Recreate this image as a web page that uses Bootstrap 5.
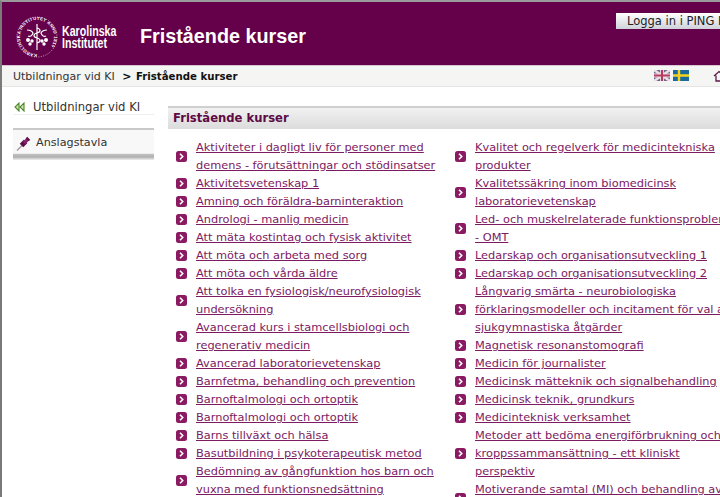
<!DOCTYPE html>
<html lang="sv">
<head>
    <meta charset="UTF-8">
    <meta name="viewport" content="width=device-width, initial-scale=1.0">
    <title>Fristående kurser</title>
    <link href="https://cdn.jsdelivr.net/npm/bootstrap@5.3.3/dist/css/bootstrap.min.css" rel="stylesheet">
    <style>
        html, body { height: 100%; overflow: hidden; }
        body {
            font-family: "DejaVu Sans", Verdana, sans-serif;
            font-size: 12px;
            color: #333;
            background: #fff;
            border-top: 2px solid #9a9a9a;
            border-left: 2px solid #7a7a7a;
            width: 720px;
        }
        .ki-header { height: 63px; background: #65004a; position: relative; padding-top: 7px; }
        .ki-logo { width: 124px; margin-left: 14px; flex: none; }
        .ki-seal { flex: none; width: 42px; height: 42px; }
        .ki-logotext {
            font-family: "Liberation Sans", sans-serif;
            font-weight: bold; font-size: 14px; line-height: 12.500px; color: #fff;
            margin-left: 4px; width: 53px; white-space: nowrap;
            transform: scaleX(.76); transform-origin: left center;
        }
        .ki-title {
            font-family: "Liberation Sans", Arial, sans-serif;
            font-weight: bold; font-size: 19.800px; color: #fff;
            margin: 0; line-height: 1;
        }
        .login-btn {
            position: absolute; top: 11px; left: 614px; width: 104px; height: 16px; overflow: hidden;
            background: linear-gradient(#fff, #cfd2da);
            font-size: 11.5px; line-height: 16px; color: #222; padding-left: 11px;
            white-space: nowrap;
        }
        .crumbs {
            height: 22px; background: #f5f5f3; border-top: 1px solid #d9c8d2; border-bottom: 1px solid #e4e4e4;
            font-size: 11px; padding-left: 11px; line-height: 21px; position: relative; white-space: nowrap;
        }
        .crumbs b { color: #111; font-size: 10.200px; }
        .crumbs .sep { font-weight: bold; color: #111; margin: 0 1px 0 4px; }
        .flag-box { position: absolute; left: 652px; top: 4px; gap: 3px; }
        .home-ico { position: absolute; left: 711px; top: 4px; }
        .side { width: 141px; margin-left: 11px; flex: none; padding-top: 9px; }
        .side-back {
            font-size: 11.600px; line-height: 15px; border-bottom: 1px solid #eee; padding: 4px 0 0 1px;
            white-space: nowrap; height: 19px;
        }
        .side-box {
            margin-top: 13px; height: 20px; background: #f8f8f8;
            border-top: 2px solid #c9c9c9; border-bottom: 1px solid #ececec;
            font-size: 11.200px; padding: 3px 0 0 3px; white-space: nowrap; box-sizing: content-box; gap: 5px;
        }
        .side-shadow { height: 6px; background: linear-gradient(#c2c2c2, #b0b0b0 50%, #f0f0f0); }
        .panel-box { margin: 19px 0 0 14px; width: 640px; flex: none; }
        .panel-head {
            height: 23px; border-top: 2px solid #cfcfcf;
            background: linear-gradient(#f1f1f1, #dcdcdc);
            font-size: 11.600px; font-weight: bold; color: #5d0a45; padding-left: 5px; line-height: 20px;
        }
        .course-col { list-style: none; margin: 9px 0 0; padding: 0; }
        .col-a { width: 287px; flex: none; padding-left: 8px; }
        .col-b { flex: none; }
        .course-col li { display: flex; align-items: center; line-height: 18px; white-space: nowrap; }
        .course-col a { color: #7c1a62; margin-left: 9px; font-size: 11.350px; }
        .mark-ico { flex: none; width: 11px; height: 11px; display: block; }
    </style>
</head>
<body>

    <!-- header -->
    <div class="ki-header d-flex align-items-center">
        <div class="d-flex align-items-center ki-logo">
            <svg class="ki-seal" viewBox="0 0 42 42">
                <defs><path id="sealRing" d="M21 38A17 17 0 1 1 21.100 38"/></defs>
                <text fill="#fff" font-family="Liberation Sans, sans-serif" font-weight="bold" font-size="4.300" letter-spacing=".35"><textPath href="#sealRing">KAROLINSKA INSTITUTET ANNO 1810</textPath></text>
                <circle cx="21" cy="21" r="20" fill="none" stroke="#fff" stroke-width=".9" stroke-dasharray=".9 1.500" opacity=".8"/>
                <path d="M21 8V34M21 12c4 1 4 4 0 5s-4 4 0 5 4 4 0 5" fill="none" stroke="#fff" stroke-width="1.200"/>
                <path d="M11 14c3 0 5 1 6 3-1 3-3 4-5 3M31 14c-3 0-5 1-6 3 1 3 3 4 5 3" fill="none" stroke="#fff" stroke-width="1.200"/>
                <circle cx="12" cy="24" r="2" fill="#fff"/><circle cx="16" cy="25" r="1.700" fill="#fff"/><circle cx="14" cy="28" r="1.700" fill="#fff"/>
                <circle cx="30" cy="24" r="2" fill="#fff"/><circle cx="26" cy="25" r="1.700" fill="#fff"/><circle cx="28" cy="28" r="1.700" fill="#fff"/>
            </svg>
            <div class="ki-logotext">Karolinska<br>Institutet</div>
        </div>
        <h1 class="ki-title">Fristående kurser</h1>
        <div class="login-btn">Logga in i PING PONG</div>
    </div>

    <!-- breadcrumb -->
    <div class="crumbs">
        Utbildningar vid KI <span class="sep">&gt;</span> <b>Fristående kurser</b>
        <div class="flag-box d-flex">
            <svg width="16" height="11" viewBox="0 0 16 11">
                <rect width="16" height="11" fill="#6a6a8e"/>
                <path d="M0 0L16 11M16 0L0 11" stroke="#eddde4" stroke-width="2.600"/>
                <path d="M8 0V11M0 5.500H16" stroke="#eddde4" stroke-width="3.800"/>
                <path d="M8 0V11M0 5.500H16" stroke="#b83a5c" stroke-width="2"/>
            </svg>
            <svg width="16" height="11" viewBox="0 0 16 11">
                <rect width="16" height="11" fill="#1b6a9e"/>
                <path d="M6 0V11M0 5.500H16" stroke="#f5d21f" stroke-width="2.400"/>
            </svg>
        </div>
        <svg class="home-ico" width="12" height="12" viewBox="0 0 12 12">
            <path d="M1 6L6 1.500 11 6M3 5.500V11H9V5.500" fill="none" stroke="#5d1a49" stroke-width="1.300"/>
        </svg>
    </div>

    <div class="d-flex">
        <!-- left menu -->
        <div class="side">
            <div class="side-back d-flex align-items-center gap-2">
                <svg width="11" height="10" viewBox="0 0 11 10">
                    <path d="M5 1V9L1 5ZM10 1V9L6 5Z" fill="#cfe3b4" stroke="#4f8a2a" stroke-width="1.100"/>
                </svg>
                <span>Utbildningar vid KI</span>
            </div>
            <div class="side-box d-flex align-items-center">
                <svg width="15" height="15" viewBox="0 0 15 15">
                    <path d="M1 14.500L6 9.500" stroke="#a396a0" stroke-width="1.200"/>
                    <path d="M5.500 9.500L9.500 5.500" stroke="#5b0f47" stroke-width="5"/>
                    <path d="M8 7L12 3" stroke="#8a1f6c" stroke-width="3.500"/>
                    <path d="M10.500 1.500L13.500 4.500" stroke="#5b0f47" stroke-width="2"/>
                </svg>
                <span>Anslagstavla</span>
            </div>
            <div class="side-shadow"></div>
        </div>

        <!-- course list -->
        <div class="panel-box">
            <div class="panel-head">Fristående kurser</div>
            <div class="d-flex">
                <ul class="course-col col-a" id="colA"></ul>
                <ul class="course-col col-b" id="colB"></ul>
            </div>
        </div>
    </div>

    <script>
        // br in the strings = where the line wraps in the list
        const colA = [
            'Aktiviteter i dagligt liv för personer med<br>demens - förutsättningar och stödinsatser',
            'Aktivitetsvetenskap 1',
            'Amning och föräldra-barninteraktion',
            'Andrologi - manlig medicin',
            'Att mäta kostintag och fysisk aktivitet',
            'Att möta och arbeta med sorg',
            'Att möta och vårda äldre',
            'Att tolka en fysiologisk/neurofysiologisk<br>undersökning',
            'Avancerad kurs i stamcellsbiologi och<br>regenerativ medicin',
            'Avancerad laboratorievetenskap',
            'Barnfetma, behandling och prevention',
            'Barnoftalmologi och ortoptik',
            'Barnoftalmologi och ortoptik',
            'Barns tillväxt och hälsa',
            'Basutbildning i psykoterapeutisk metod',
            'Bedömning av gångfunktion hos barn och<br>vuxna med funktionsnedsättning'
        ];
        const colB = [
            'Kvalitet och regelverk för medicintekniska<br>produkter',
            'Kvalitetssäkring inom biomedicinsk<br>laboratorievetenskap',
            'Led- och muskelrelaterade funktionsproblem<br>- OMT',
            'Ledarskap och organisationsutveckling 1',
            'Ledarskap och organisationsutveckling 2',
            'Långvarig smärta - neurobiologiska<br>förklaringsmodeller och incitament för val av<br>sjukgymnastiska åtgärder',
            'Magnetisk resonanstomografi',
            'Medicin för journalister',
            'Medicinsk mätteknik och signalbehandling',
            'Medicinsk teknik, grundkurs',
            'Medicinteknisk verksamhet',
            'Metoder att bedöma energiförbrukning och<br>kroppssammansättning - ett kliniskt<br>perspektiv',
            'Motiverande samtal (MI) och behandling av<br>alkoholproblem'
        ];
        const mark = '<svg class="mark-ico" viewBox="0 0 11 11"><rect width="11" height="11" rx="2.500" fill="#8a1a62"/><path d="M4 2.800L6.700 5.500 4 8.200" fill="none" stroke="#fff" stroke-width="1.600"/></svg>';
        function fill(id, items) {
            document.getElementById(id).innerHTML = items.map(t => `<li>${mark}<a href="#">${t}</a></li>`).join('');
        }
        fill('colA', colA);
        fill('colB', colB);
    </script>
    <script src="https://cdn.jsdelivr.net/npm/bootstrap@5.3.3/dist/js/bootstrap.bundle.min.js"></script>
</body>
</html>
